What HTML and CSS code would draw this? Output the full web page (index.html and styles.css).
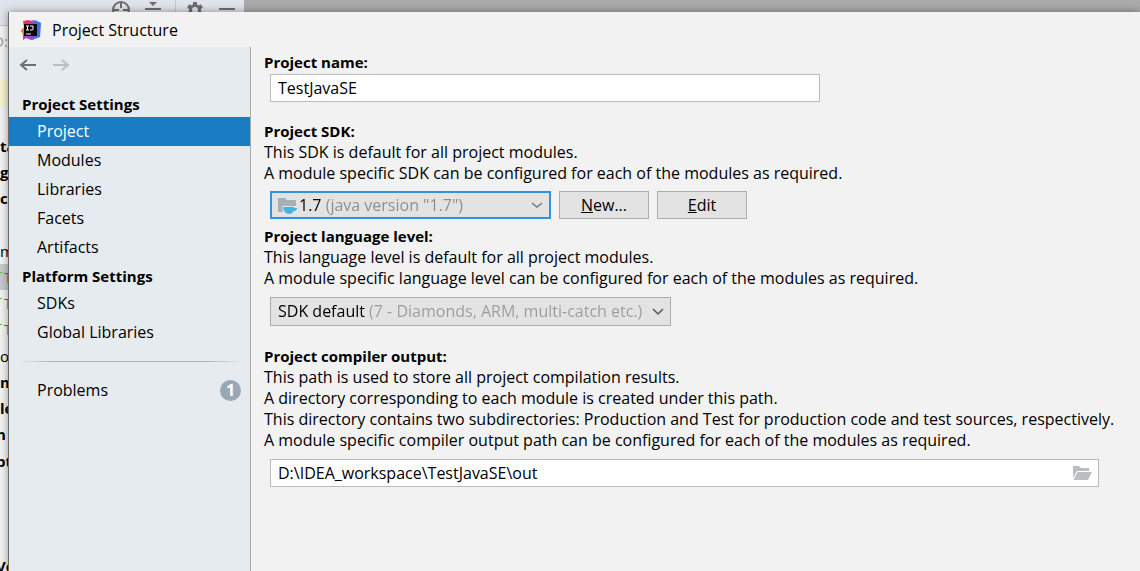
FILE: index.html
```html
<!DOCTYPE html>
<html lang="en">
<head>
<meta charset="utf-8">
<title>Project Structure</title>
<link rel="stylesheet" href="styles.css">
</head>
<body>
<div class="ide">
  <div class="ide-toolbar">
    <div class="tool-icons">
      <svg class="tool-icon" viewBox="0 0 20 20"><circle cx="10" cy="10" r="8" fill="none" stroke="#6e6e6e" stroke-width="2"/><path d="M10 2v6M10 12v6M2 10h6M12 10h6" stroke="#6e6e6e" stroke-width="2"/></svg>
      <svg class="tool-icon" viewBox="0 0 20 20"><path d="M6 2h8l-4 4zM2 8h16v2H2zM6 17h8l-4-4z" fill="#6e6e6e"/></svg>
      <span class="tool-split"></span>
      <svg class="tool-icon" viewBox="0 0 20 20"><circle cx="10" cy="10" r="4.5" fill="none" stroke="#6e6e6e" stroke-width="3"/><path d="M10 2v4M10 14v4M3.1 6l3.4 2M13.5 12l3.4 2M3.1 14l3.4-2M13.5 8l3.4-2" stroke="#6e6e6e" stroke-width="4"/></svg>
      <svg class="tool-icon" viewBox="0 0 20 20"><path d="M2 8h16v2H2z" fill="#6e6e6e"/></svg>
    </div>
    <div class="tool-rest"></div>
  </div>
  <div class="tree">
    <div class="tree-group"><span class="path">D:</span><span></span><span class="marked"></span><span></span></div>
    <div class="tree-group"><b>ta</b><b>ge</b><b>ct</b><span></span></div>
    <div class="tree-group"><span>m</span><span class="leaf chosen">T</span><span class="leaf">T</span><span class="leaf">T</span></div>
    <div class="tree-group"><span>ol</span><b>m</b><b>le</b><b class="edge">n</b></div>
    <div class="tree-group"><b class="edge">pt</b><span></span><span></span><span></span></div>
    <div class="tree-group"><b class="edge">Vo</b></div>
  </div>
</div>

<div class="dialog" role="dialog" aria-labelledby="dialog-title">
  <header class="titlebar">
    <svg class="logo" viewBox="0 0 20 20">
      <path d="M2 1l6-1 4 3-2 8-10 1 3-5z" fill="#fe2857"/>
      <path d="M0 10l4-3 7 7-5 3-4-2z" fill="#fc801d"/>
      <path d="M11 3l3-3 6 3-1 14-8 3-6-3z" fill="#3b6ef0"/>
      <path d="M2 14l9-1 2 6-3 1-5-2-3 2z" fill="#a343d5"/>
      <path d="M8 1l5-1-2 5-4-1z" fill="#c93ba0"/>
      <rect x="3" y="4" width="13" height="12" fill="#050505"/>
      <path d="M5 6h3M6.500 6v4M5 10h3M9 6h3v3q0 1-1 1H9M5 14h5" fill="none" stroke="#fff" stroke-width="1"/>
    </svg>
    <h1 class="title" id="dialog-title">Project Structure</h1>
  </header>
  <div class="body">
    <nav class="sidebar">
      <div class="history">
        <button class="history-btn" aria-label="Back"><svg viewBox="0 0 18 14"><path d="M17 7H2M8 2L2 7l6 5" fill="none" stroke="#6e6e6e" stroke-width="2"/></svg></button>
        <button class="history-btn faded" aria-label="Forward"><svg viewBox="0 0 18 14"><path d="M1 7h15M10 2l6 5-6 5" fill="none" stroke="#6e6e6e" stroke-width="2"/></svg></button>
      </div>
      <h2 class="nav-heading">Project Settings</h2>
      <a class="nav-item active" href="#project">Project</a>
      <a class="nav-item" href="#modules">Modules</a>
      <a class="nav-item" href="#libraries">Libraries</a>
      <a class="nav-item" href="#facets">Facets</a>
      <a class="nav-item" href="#artifacts">Artifacts</a>
      <h2 class="nav-heading">Platform Settings</h2>
      <a class="nav-item" href="#sdks">SDKs</a>
      <a class="nav-item" href="#global">Global Libraries</a>
      <hr class="divider">
      <a class="nav-item" href="#problems">Problems <span class="count">1</span></a>
    </nav>
    <main class="content">
      <section class="block">
        <label class="label" for="name">Project name:</label>
        <div class="field name-field"><input class="input" id="name" type="text" value="TestJavaSE"></div>
      </section>
      <section class="block sdk">
        <label class="label" for="sdk">Project SDK:</label>
        <p>This SDK is default for all project modules.</p>
        <p>A module specific SDK can be configured for each of the modules as required.</p>
        <div class="controls">
          <div class="combo focused">
            <svg class="combo-icon" viewBox="0 0 20 20"><path d="M1 3h7l2 2h9v12H1z" fill="#a7b0b7"/><path d="M5 11h15v6H6z" fill="#e3e3e3"/><path d="M6 12h11v1h3q0 3-3.500 3-1 3-4.500 3-5 0-6-7z" fill="#40b6e0"/></svg>
            <select class="select sdk-select" id="sdk"><option>1.7 (java version "1.7")</option></select>
            <svg class="chevron" viewBox="0 0 12 12"><path d="M1 4l5 4 5-4" fill="none" stroke="#777" stroke-width="1.500"/></svg>
          </div>
          <button class="button"><u>N</u>ew...</button>
          <button class="button"><u>E</u>dit</button>
        </div>
      </section>
      <section class="block level">
        <label class="label" for="level">Project language level:</label>
        <p>This language level is default for all project modules.</p>
        <p>A module specific language level can be configured for each of the modules as required.</p>
        <div class="controls">
          <div class="combo wide">
            <select class="select level-select" id="level"><option>SDK default (7 - Diamonds, ARM, multi-catch etc.)</option></select>
            <svg class="chevron" viewBox="0 0 12 12"><path d="M1 3l5 5 5-5" fill="none" stroke="#555" stroke-width="1.500"/></svg>
          </div>
        </div>
      </section>
      <section class="block">
        <label class="label" for="output">Project compiler output:</label>
        <p>This path is used to store all project compilation results.</p>
        <p>A directory corresponding to each module is created under this path.</p>
        <p>This directory contains two subdirectories: Production and Test for production code and test sources, respectively.</p>
        <p>A module specific compiler output path can be configured for each of the modules as required.</p>
        <div class="field path-field">
          <input class="input" id="output" type="text" value="D:\IDEA_workspace\TestJavaSE\out">
          <button class="browse" aria-label="Browse"><svg viewBox="0 0 20 16"><path d="M1 1h6l2 2h8v3H5l-4 7z" fill="#b9bec2"/><path d="M5.500 7H20l-4 8H1.500z" fill="#b9bec2"/></svg></button>
        </div>
      </section>
    </main>
  </div>
</div>
</body>
</html>
```
FILE: styles.css
```css
* { box-sizing: border-box; }
body {
  margin: 0;
  height: 100vh;
  overflow: hidden;
  position: relative;
  background: #f2f2f2;
  color: #000;
  font: 16px/21px "Open Sans", "Noto Sans", sans-serif;
}
h1, h2, p { margin: 0; font-size: inherit; }
button, input, select { font: inherit; color: inherit; }
svg { display: block; }

.ide-toolbar {
  display: flex;
  height: 26px;
  background: #dfe3eb;
  border-bottom: 1px solid #c4c4c4;
}
.tool-icons {
  display: flex;
  align-items: flex-start;
  gap: 12px;
  width: 244px;
  padding-left: 111px;
}
.tool-icon { width: 20px; height: 20px; flex: none; }
.tool-split { width: 1px; height: 20px; margin: 0 -3px 0 0; background: #c4c8ce; }
.tool-rest { flex: 1; background: #aaa; }
.tree { width: 40px; padding-top: 2px; font-size: 15px; }
.tree-group { display: grid; grid-auto-rows: 26px; margin-bottom: 1px; }
.tree-group > * { display: flex; align-items: center; }
.path { color: #999; margin-left: -7px; }
.edge { margin-left: -4px; }
.marked { background: #f5f3cf; }
.leaf {
  padding-left: 4px;
  color: #a35a20;
  background: linear-gradient(#62b543, #62b543) 0 8px / 2px 1px no-repeat;
}
.chosen { background-color: #c8c8c8; }

.dialog {
  position: absolute;
  inset: 12px 0 0 8px;
  display: flex;
  flex-direction: column;
  background: #f2f2f2;
  border-left: 1px solid #6b6b6b;
  box-shadow: 0 0 8px rgba(0, 0, 0, 0.4);
}
.titlebar {
  display: flex;
  align-items: center;
  gap: 11px;
  height: 35px;
  padding: 1px 0 0 12px;
}
.logo { width: 20px; height: 20px; }
.title { font-weight: 400; }
.body { display: flex; flex: 1; min-height: 0; }

.sidebar {
  width: 242px;
  flex: none;
  background: #e6ebef;
  border-right: 1px solid #a8a8a8;
}
.history { display: flex; gap: 15px; height: 43px; padding: 11px 0 0 10px; }
.history-btn { width: 18px; height: 14px; padding: 0; border: 0; background: none; }
.faded { opacity: 0.35; }
.nav-heading { height: 27px; padding-left: 13px; font-size: 15px; line-height: 29px; font-weight: 700; }
.nav-item {
  display: flex;
  align-items: center;
  justify-content: space-between;
  height: 29px;
  padding: 0 9px 0 28px;
  color: #000;
  text-decoration: none;
}
.active { background: #1a7dc4; color: #fff; }
.divider {
  height: 1px;
  margin: 14px 8px;
  border: 0;
  background: linear-gradient(90deg, transparent, #b0b4b8 15%, #b0b4b8 85%, transparent);
}
.count {
  width: 21px;
  height: 21px;
  border-radius: 50%;
  background: #9aa7b4;
  color: #fff;
  font-weight: 700;
  text-align: center;
}

.content { flex: 1; min-width: 0; padding: 5px 41px 0 13px; }
.block { margin-bottom: 19px; }
.sdk { margin-bottom: 7px; }
.label { display: block; font-size: 15px; font-weight: 700; }
p { white-space: nowrap; }
.field {
  display: flex;
  align-items: center;
  height: 28px;
  margin: 1px 0 0 6px;
  border: 1px solid #bababa;
  background: #fff;
}
.name-field { max-width: 550px; }
.path-field { margin-top: 8px; }
.input {
  flex: 1;
  min-width: 0;
  height: 24px;
  padding: 0 7px;
  border: 0;
  outline: 0;
  background: none;
}
.browse { width: 20px; height: 16px; margin-right: 6px; padding: 0; border: 0; background: none; }
.controls { display: flex; gap: 8px; margin: 7px 0 0 6px; }
.level .controls { margin-top: 8px; }
.level { margin-bottom: 20px; }
.combo {
  display: flex;
  align-items: center;
  width: 281px;
  height: 28px;
  padding: 0 6px 0 7px;
  border: 1px solid #adadad;
  background: #e3e3e3;
}
.focused { padding-left: 5px; border: 2px solid #3294e0; }
.wide { width: 401px; height: 29px; }
.combo-icon { width: 20px; height: 20px; flex: none; margin-right: 2px; }
.select {
  flex: 1;
  min-width: 0;
  padding: 0;
  border: 0;
  outline: 0;
  appearance: none;
  color: transparent;
  background: linear-gradient(90deg, #000 25px, #8c8c8c 25px) text;
}
.level-select { background: linear-gradient(90deg, #000 90px, #9c9c9c 90px) text; }
.chevron { width: 12px; height: 12px; flex: none; }
.button {
  width: 90px;
  height: 28px;
  padding: 0;
  border: 1px solid #adadad;
  background: #e3e3e3;
}
```
